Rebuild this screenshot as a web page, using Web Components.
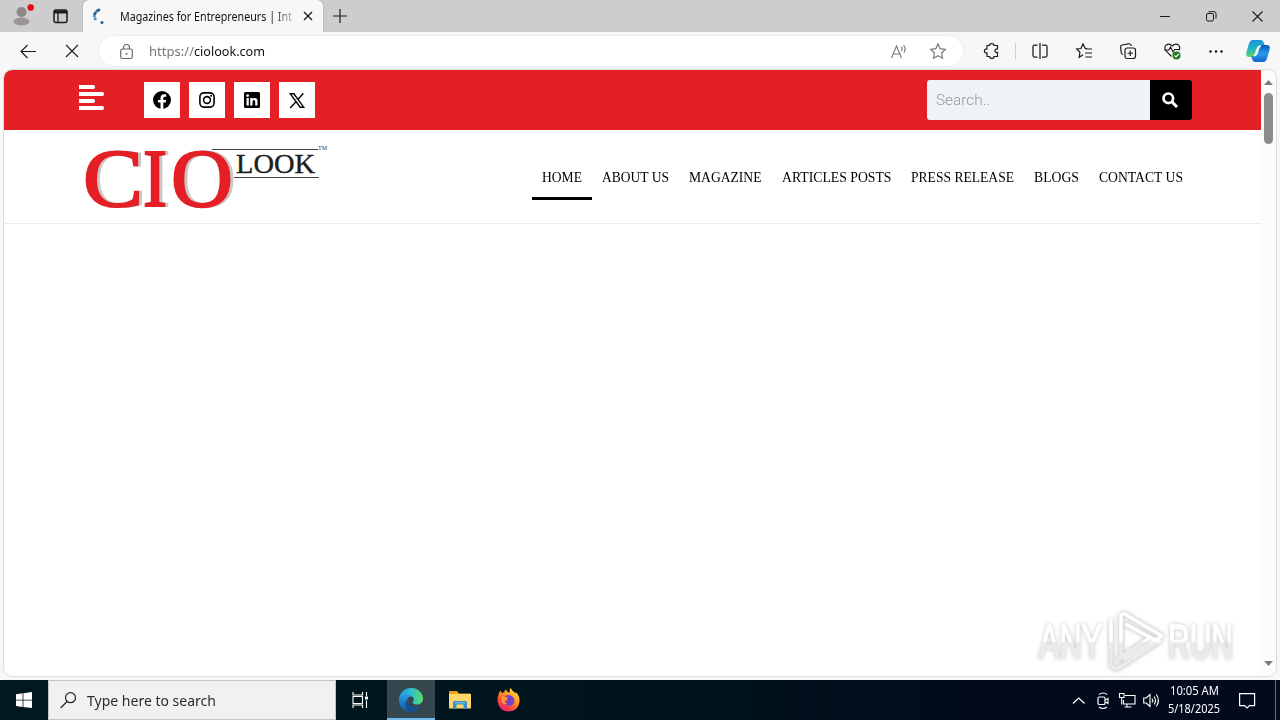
<!DOCTYPE html>
<html lang="en">
<head>
<meta charset="utf-8">
<title>Magazines for Entrepreneurs</title>
<style>
  body {
    margin: 0;
    width: 1280px;
    height: 720px;
    overflow: hidden;
    display: flex;
    flex-direction: column;
    background: #f7f7f7;
    font-family: "Noto Sans", sans-serif;
    color: #111;
  }
</style>
</head>
<body>
<tab-strip label="Magazines for Entrepreneurs | Int"></tab-strip>
<tool-bar></tool-bar>
<page-view>
  <site-top></site-top>
  <site-nav></site-nav>
  <any-watermark slot="overlay"></any-watermark>
</page-view>
<task-bar></task-bar>

<script>
const icons = {
  profile: `<g stroke="none"><circle cx="10.500" cy="7" r="5" fill="#8a8785"/><ellipse cx="10.500" cy="16.500" rx="8" ry="4" fill="#999694"/><circle cx="19.700" cy="2.500" r="3.200" fill="#e00b12"/></g>`,
  workspace: `<rect x="1" y="1" width="13" height="12.500" rx="2" stroke-width="1.500"/><path d="M1 3h13" stroke-width="3"/><path d="M5 4v9.500" stroke-width="1.300"/>`,
  spinner: `<path d="M8 1.500C4 3 2 5.500 2.300 9" stroke="#24618f" stroke-width="2.800" stroke-dasharray="4.200 .5"/><circle cx="3.200" cy="10.800" r="1.500" fill="#4b84ad" stroke="none"/><circle cx="10" cy="14.500" r="1.500" fill="#24618f" stroke="none"/>`,
  close: `<path d="M1 1l8 8M9 1l-8 8" stroke-width="1.400"/>`,
  plus: `<path d="M7 0v14M0 7h14" stroke-width="1.200"/>`,
  minimize: `<path d="M0 5.500h10"/>`,
  restore: `<rect x=".5" y="2.500" width="7" height="7.500" rx="1.500"/><path d="M2.500 .7h5.500q2 0 2 2v5"/>`,
  exit: `<path d="M.5 .5l10 10M10.500 .5l-10 10" stroke-width="1.100"/>`,
  back: `<path d="M16 7.500H1M7.500 1L1 7.500 7.500 14" stroke-width="1.100"/>`,
  stop: `<path d="M1 1l12 12M13 1L1 13" stroke-width="1.100"/>`,
  lock: `<rect x=".7" y="5" width="11.600" height="9.500" rx="1.800" stroke="#6b6b6b" stroke-width="1.200"/><path d="M3.500 5V3.500a3 3 0 016 0V5" stroke="#6b6b6b" stroke-width="1.200"/><circle cx="6.500" cy="9.700" r="1" fill="#6b6b6b" stroke="none"/>`,
  read: `<path d="M.5 14L5.500 2l5 12M2.200 10h6.600M10.300 3q1.700 1.700 0 4M12.500 1q3 3.500 .5 7.500" stroke="#777" stroke-width="1.100"/>`,
  star: `<path d="M8 1l2.200 4.700 5.100.7-3.700 3.600.9 5.200L8 12.700l-4.500 2.500.9-5.200L.7 6.400l5.100-.7z" stroke="#777" stroke-width="1.200"/>`,
  puzzle: `<path d="M3 2.500h2.500c0-2.500 4.500-2.500 4.500 0h3.500v3.500c-3.500-.5-3.500 4 0 3.500v4H10c.5 2.500-4.500 2.500-4.500 0H3V10C-.5 10.500-.5 5.500 3 6z" stroke-width="1.200"/>`,
  split: `<path d="M5.500 2H2.500q-1.500 0-1.500 1.500v9q0 1.500 1.500 1.500h3M10 2h3.500q1.500 0 1.500 1.500v9q0 1.500-1.500 1.500H10M8 0v16" stroke-width="1.250"/>`,
  favorites: `<path d="M11 5.700L9.300 5.500 7 1 5 5.500.7 6l3.200 3.300-.7 5L7 11.700M9.500 6h6.500M9 10h7M9.500 14H16" stroke-width="1.200"/>`,
  collections: `<rect x="5" y="5" width="10.500" height="10.500" rx="2.200" stroke-width="1.200"/><path d="M10.250 7.500v5.500M7.500 10.250H13M3 11.500Q1.500 11 1.200 9.500L.6 4Q.5 2.300 2 2L8.500 .8q2-.3 2.500 1.200L11.500 3" stroke-width="1.200"/>`,
  health: `<path d="M7.500 13.500L2 8Q-.3 4.500 2 2.200 5.500-.3 8.300 3 11.500-.3 14.800 2.300q2 2.500 0 5M.3 7h4.500l1.700-3 2.500 5 1.600-2.500H16" stroke-width="1.100"/><circle cx="12.500" cy="12.500" r="4" fill="#187b1c" stroke="none"/><path d="M10.500 12.500l1.500 1.500 2.700-3" stroke="#fff" stroke-width="1.200"/>`,
  dots: `<g fill="#111" stroke="none"><circle cx="1.500" cy="1.500" r="1.250"/><circle cx="7" cy="1.500" r="1.250"/><circle cx="12.500" cy="1.500" r="1.250"/></g>`,
  copilot: `<defs><linearGradient id="a" x1="0" y1="0" x2=".2" y2="1"><stop stop-color="#1d8be8"/><stop offset=".5" stop-color="#1cb0c9"/><stop offset="1" stop-color="#65d968"/></linearGradient><linearGradient id="b" x1="0" y1="0" x2="0" y2="1"><stop stop-color="#0a55b5"/><stop offset=".5" stop-color="#2a9ce8"/><stop offset="1" stop-color="#1467d8"/></linearGradient></defs><g stroke="none"><path d="M7 0h8q2 0 2.700 2.500L19 6h-4q-2 0-2.700 2L10 14q-1 3-3 3H3.500Q-1 17 .5 12L3 3.500Q4 0 7 0z" fill="url(#a)"/><path d="M17 22H9q-2 0-2.700-2.500L5 16h3.500q2 0 2.500-2l2-6q1-3 4-3h3.500Q25 5 23.500 10L21 18.500Q20 22 17 22z" fill="url(#b)"/><path d="M13.500 6q-1.700.5-2.200 2L9 14.500q-.4 1.200-1.200 1.500 2.200.2 3.200-2l2-6q.6-1.700 2-2z" fill="#fff" stroke="#fff" stroke-width="1"/></g>`,
  menu: `<g fill="#fff" stroke="none"><path d="M0 0h14.500q1.500 0 1.500 2t-1.500 2H0zM0 7h23.500q1.500 0 1.500 2t-1.500 2H0zM0 14h14.500q1.500 0 1.500 2t-1.500 2H0zM0 21h23.500q1.500 0 1.500 2t-1.500 2H0z"/></g>`,
  facebook: `<circle cx="9" cy="9" r="9" fill="#000" stroke="none"/><path d="M7.500 18v-6.500H5V9h2.500V7q0-3.800 3.700-3.800h2V5.700h-1.300q-1.600 0-1.600 1.500V9h2.800l-.5 2.500h-2.300V18z" fill="#fff" stroke="none"/>`,
  instagram: `<rect x=".9" y=".9" width="14.200" height="14.200" rx="4" stroke="#000" stroke-width="1.600"/><circle cx="8" cy="8" r="3.400" stroke="#000" stroke-width="1.600"/><circle cx="12.200" cy="3.800" r="1" fill="#000" stroke="none"/>`,
  linkedin: `<rect width="16" height="16" rx="1.500" fill="#000" stroke="none"/><g fill="#fff" stroke="none"><circle cx="3.600" cy="3.600" r="1.400"/><path d="M2.500 6.100h2.300v7.500H2.500zM6.200 6.100h2.200v1q.8-1.200 2.300-1.200 2.800 0 2.800 3.200v4.500h-2.300V9.600q0-1.700-1.200-1.700-1.500 0-1.500 1.700v4H6.200z"/></g>`,
  x: `<path d="M1.300 .8h3.500L14.700 14.200h-3.500zM14.300 .3L9 6.500M6.800 9L1.200 15" stroke="#000" stroke-width="1.400"/>`,
  search: `<circle cx="6.300" cy="6.300" r="4.800" stroke="#fff" stroke-width="2.600"/><path d="M10 10l5 5" stroke="#fff" stroke-width="3"/>`,
  up: `<path d="M0 5L4.500 0 9 5z" fill="#7c7c7c" stroke="none"/>`,
  down: `<path d="M0 0h9L4.500 5z" fill="#7c7c7c" stroke="none"/>`,
  windows: `<path d="M0 2.300L6.600 1.300v6.400H0zM7.400 1.200L16 0v7.700H7.400zM0 8.400h6.600v6.500L0 13.900zM7.400 8.400H16V16l-8.600-1.100z" fill="#fff" stroke="none"/>`,
  lens: `<circle cx="10.500" cy="5.700" r="5" stroke="#222" stroke-width="1.200"/><path d="M7 9.500L.7 16" stroke="#222" stroke-width="1.200"/>`,
  taskview: `<path d="M1 0v3h9.500V0M1 16v-3h9.500v3M1 4.500h9.500v7H1zM14.500 0v4M14.500 8.500V16" stroke="#fff" stroke-width="1.100"/><path d="M13 4.500h3v3h-3z" fill="#fff" stroke="none"/>`,
  edge: `<defs><linearGradient id="a"><stop stop-color="#2294df"/><stop offset=".5" stop-color="#2cbfd4"/><stop offset="1" stop-color="#5cdc62"/></linearGradient><linearGradient id="b" x2="0" y2="1"><stop stop-color="#2b9de2"/><stop offset="1" stop-color="#0c55a5"/></linearGradient></defs><g stroke="none"><path d="M0 12C0 5 5 0 12 0s12 5 12 10.500c0 4-3 6-6 6-4 0-5-1.700-3.700-3.200C17 9 9 5 3 9q-2 1-3 3z" fill="url(#a)"/><path d="M0 12C1 7 9 5.500 13 8.500c-4-.5-5 3-4.500 5 1 5 6.500 7 12.500 5.500-3 4-7 5-10 4.800C4.500 23.500 0 18.500 0 12z" fill="url(#b)"/><path d="M8.500 11c-4 4-2 11 4 12.800 4-.3 7-2.300 8.700-4.900C15 21 8 18 8.500 11z" fill="#164f8e"/></g>`,
  folder: `<g stroke="none"><path d="M0 1q0-1 1-1h7l2 2.500h11V17H0z" fill="#e9a21c"/><path d="M0 3h22v14.500H0z" fill="#fbd86c"/><path d="M4 18v-6.500q0-1.500 1.500-1.500h11q1.500 0 1.500 1.500V18h-3.500v-4.500h-7V18z" fill="#3e8cc8"/><path d="M6 11h10v1.500H6z" fill="#73b6e2"/></g>`,
  firefox: `<defs><linearGradient id="a" x1=".9" y1="0" x2=".2" y2="1"><stop stop-color="#fff14a"/><stop offset=".4" stop-color="#ff9a22"/><stop offset=".7" stop-color="#ff4b3d"/><stop offset="1" stop-color="#e01585"/></linearGradient></defs><g stroke="none"><path d="M2 5L3.200 2.500 5 5 7.500 4 8 1.500q2 1 3 3l2-.5Q12 2 13.500 0q2 3.500 5.500 5.500l-.3-1.500Q23 8 22.500 13.500 21.500 23 11.500 23.500 1.500 23 .5 13 .3 9 2 5z" fill="url(#a)"/><path d="M8 8.500q4-3 8 .5 2.500 3 .5 6.500-2.500 3.500-6.500 2-3.500-1.500-3.200-4.500 2 1 4-.5L9 10.500z" fill="#7441cf"/><path d="M5 8q3 1 6 1.500-.5 2-3.500 2.500 0 3 3.500 4-5 1-6.500-3z" fill="#ff982b"/></g>`,
  chevron: `<path d="M0 6.500L5.750 1l5.750 5.500" stroke="#fff" stroke-width="1.200"/>`,
  meet: `<rect x="1" y="5" width="7" height="7.500" rx="1.300" stroke="#fff" stroke-width="1.200"/><path d="M8.500 8l2.500-1.500v5L8.500 10M2 2.500Q6 -.5 10 2.500M2 15Q6 18 10 15" stroke="#fff" stroke-width="1.100"/>`,
  network: `<path d="M6 2.500h10v8.500H4.500V7M8 11v3M5.500 14h7M.5 .5h4.500v4H.5zM2.700 5v6.500" stroke="#fff" stroke-width="1.100"/>`,
  sound: `<path d="M.7 5h2.500L7 1.500v12L3.200 10H.7zM9 5.500q1.500 2 0 4M11 3.500q3 4 0 8M13.300 1.500q4.200 6 0 12" stroke="#fff" stroke-width="1.100"/>`,
  notify: `<path d="M.6 .6h15v12h-5L8 15l-2.500-2.400H.6z" stroke="#fff" stroke-width="1.200"/>`,
};

const render = (host, html) => {
  host.attachShadow({ mode: 'open' });
  const template = document.createElement('template');
  template.innerHTML = html;
  host.shadowRoot.appendChild(template.content.cloneNode(true));
};

// <ui-icon name w h box>: the drawing is centred in a cell "box" pixels wide
class UiIcon extends HTMLElement {
  connectedCallback() {
    if (this.shadowRoot) return;
    const w = this.getAttribute('w');
    const h = this.getAttribute('h');
    const box = this.getAttribute('box') || w;
    render(this, `
      <style>
        :host { display: flex; flex: none; width: ${box}px; align-items: center; justify-content: center; }
        svg { display: block; overflow: visible; flex: none; fill: none; stroke: #1b1b1b; }
      </style>
      <svg width="${w}" height="${h}" viewBox="0 0 ${w} ${h}">${icons[this.getAttribute('name')]}</svg>
    `);
  }
}

// <fit-text w>: one line, condensed or widened so that it is exactly w pixels wide
class FitText extends HTMLElement {
  connectedCallback() {
    if (this.shadowRoot) return;
    const w = Number(this.getAttribute('w'));
    render(this, `
      <style>
        :host { display: block; flex: none; width: ${w}px; white-space: nowrap; }
        span { display: inline-block; transform-origin: 0 50%; }
      </style>
      <span><slot></slot></span>
    `);
    const line = this.shadowRoot.querySelector('span');
    line.style.transform = `scaleX(${w / line.getBoundingClientRect().width})`;
  }
}

class TabStrip extends HTMLElement {
  connectedCallback() {
    if (this.shadowRoot) return;
    render(this, `
      <style>
        :host { display: flex; flex: none; height: 32px; background: #cdcdcd; }
        .tab {
          display: flex;
          align-items: center;
          box-sizing: border-box;
          width: 240px;
          margin-left: 7px;
          padding: 0 10px 0 9px;
          border-radius: 6px 6px 0 0;
          background: #f7f7f7;
          box-shadow: 0 0 2px #999;
          clip-path: inset(0 -3px 0 -3px);
        }
        fit-text {
          margin-left: 14px;
          font-size: 12px;
          -webkit-mask: linear-gradient(90deg, #000 152px, #0003 174px);
          mask: linear-gradient(90deg, #000 152px, #0003 174px);
        }
        .tab ui-icon:last-child { margin-left: auto; }
        .space { flex: 1; }
      </style>
      <ui-icon name="profile" w="22" h="22" box="44"></ui-icon>
      <ui-icon name="workspace" w="15" h="14" box="32"></ui-icon>
      <div class="tab">
        <ui-icon name="spinner" w="14" h="16"></ui-icon>
        <fit-text w="172">${this.getAttribute('label')}</fit-text>
        <ui-icon name="close" w="10" h="10"></ui-icon>
      </div>
      <ui-icon name="plus" w="14" h="14" box="34"></ui-icon>
      <div class="space"></div>
      <ui-icon name="minimize" w="10" h="10" box="46"></ui-icon>
      <ui-icon name="restore" w="11" h="11" box="46"></ui-icon>
      <ui-icon name="exit" w="11" h="11" box="46"></ui-icon>
    `);
  }
}

class ToolBar extends HTMLElement {
  constructor() {
    super();
    render(this, `
      <style>
        :host { display: flex; flex: none; align-items: center; height: 38px; padding-left: 6px; box-sizing: border-box; }
        .address {
          display: flex;
          align-items: center;
          box-sizing: border-box;
          width: 864px;
          height: 30px;
          margin: 0 7px 0 5px;
          padding: 0 5px 0 7px;
          border-radius: 15px;
          background: #fff;
          box-shadow: 0 0 2px #ddd;
        }
        .url { display: flex; flex: 1; margin-left: 3px; font-size: 13px; }
        .scheme { color: #767676; }
        hr { width: 1px; height: 16px; border: 0; margin: 0 2px 0 3px; background: #cfcfcf; }
      </style>
      <ui-icon name="back" w="16" h="15" box="44"></ui-icon>
      <ui-icon name="stop" w="14" h="14" box="44"></ui-icon>
      <div class="address">
        <ui-icon name="lock" w="13" h="15" box="40"></ui-icon>
        <div class="url">
          <fit-text class="scheme" w="45">https://</fit-text><fit-text w="71">ciolook.com</fit-text>
        </div>
        <ui-icon name="read" w="15" h="15" box="40"></ui-icon>
        <ui-icon name="star" w="16" h="16" box="40"></ui-icon>
      </div>
      <ui-icon name="puzzle" w="15" h="16" box="42"></ui-icon>
      <hr>
      <ui-icon name="split" w="16" h="16" box="44"></ui-icon>
      <ui-icon name="favorites" w="16" h="16" box="44"></ui-icon>
      <ui-icon name="collections" w="16" h="16" box="44"></ui-icon>
      <ui-icon name="health" w="16" h="16" box="44"></ui-icon>
      <ui-icon name="dots" w="14" h="3" box="44"></ui-icon>
      <ui-icon name="copilot" w="24" h="22" box="40"></ui-icon>
    `);
  }
}

class PageView extends HTMLElement {
  constructor() {
    super();
    render(this, `
      <style>
        :host {
          position: relative;
          display: flex;
          flex: none;
          width: 1272px;
          height: 606px;
          margin: 0 4px 4px;
          border-radius: 8px;
          overflow: hidden;
          background: #fff;
          outline: 1px solid #dedede;
        }
        .content { flex: 1; }
        .scroll {
          display: flex;
          flex-direction: column;
          align-items: center;
          justify-content: space-between;
          width: 15px;
          box-sizing: border-box;
          padding: 10px 0;
          background: #fcfcfc;
        }
        .thumb { width: 9px; height: 51px; margin: 8px 0 auto; border-radius: 5px; background: #8b8b8b; }
      </style>
      <div class="content"><slot></slot></div>
      <div class="scroll">
        <ui-icon name="up" w="9" h="5"></ui-icon>
        <div class="thumb"></div>
        <ui-icon name="down" w="9" h="5"></ui-icon>
      </div>
      <slot name="overlay"></slot>
    `);
  }
}

class SiteTop extends HTMLElement {
  constructor() {
    super();
    render(this, `
      <style>
        :host {
          display: flex;
          align-items: center;
          box-sizing: border-box;
          height: 60px;
          padding: 0 69px 0 75px;
          background: #e41f26;
        }
        .menu { align-self: flex-start; margin: 15px 40px 0 0; }
        .social { display: flex; gap: 9px; }
        .social ui-icon { height: 36px; background: #fff; }
        .search { display: flex; margin-left: auto; height: 40px; border-radius: 3px; overflow: hidden; }
        .field {
          display: flex;
          align-items: center;
          width: 214px;
          padding-left: 9px;
          background: #eff2f6;
          color: #97999c;
          font: 300 15px Roboto, sans-serif;
        }
        .go { background: #000; padding-right: 2px; }
      </style>
      <ui-icon class="menu" name="menu" w="25" h="25"></ui-icon>
      <div class="social">
        <ui-icon name="facebook" w="18" h="18" box="36"></ui-icon>
        <ui-icon name="instagram" w="16" h="16" box="36"></ui-icon>
        <ui-icon name="linkedin" w="16" h="16" box="36"></ui-icon>
        <ui-icon name="x" w="16" h="15" box="36"></ui-icon>
      </div>
      <div class="search">
        <div class="field"><fit-text w="54">Search..</fit-text></div>
        <ui-icon class="go" name="search" w="16" h="16" box="40"></ui-icon>
      </div>
    `);
  }
}

class SiteNav extends HTMLElement {
  constructor() {
    super();
    const links = [
      ['HOME', 40], ['ABOUT US', 67], ['MAGAZINE', 72.5], ['ARTICLES POSTS', 109.5],
      ['PRESS RELEASE', 103], ['BLOGS', 45], ['CONTACT US', 84],
    ];
    render(this, `
      <style>
        :host {
          display: flex;
          justify-content: space-between;
          box-sizing: border-box;
          height: 94px;
          padding: 0 68px 0 80px;
          border-bottom: 1px solid #ececec;
        }
        .logo { display: block; margin-top: 12px; overflow: visible; font-family: "Liberation Serif", serif; }
        .big { font-size: 83px; fill: #e41f26; stroke: #e41f26; stroke-width: 2; filter: drop-shadow(3px .5px 0 #cbc7c2); }
        nav { display: flex; align-items: flex-start; padding-top: 25px; color: #000; font: 15px/45px "Liberation Serif", serif; }
        nav fit-text { padding: 0 10px; height: 42px; border-bottom: 3px solid transparent; }
        nav fit-text:first-child { border-color: #000; }
      </style>
      <svg class="logo" width="244" height="70" viewBox="84 142 244 70">
        <g class="big">
          <text x="83" y="206" textLength="60" lengthAdjust="spacingAndGlyphs">C</text>
          <text x="143" y="206" textLength="24" lengthAdjust="spacingAndGlyphs">I</text>
          <text x="171" y="206" textLength="62" lengthAdjust="spacingAndGlyphs">O</text>
        </g>
        <path d="M212 149.500h106M234 177.500h85" stroke="#444" fill="none"/>
        <text x="236" y="172.500" font-size="28" fill="#1d1d1d" stroke="#1d1d1d" stroke-width=".4" textLength="79" lengthAdjust="spacingAndGlyphs">LOOK</text>
        <text x="318" y="150" font-size="6" fill="#333" textLength="9">TM</text>
      </svg>
      <nav>${links.map(([label, w]) => `<fit-text w="${w}">${label}</fit-text>`).join('')}</nav>
    `);
  }
}

class AnyWatermark extends HTMLElement {
  constructor() {
    super();
    render(this, `
      <style>
        :host { position: absolute; left: 1030px; top: 536px; }
        svg { display: block; overflow: visible; filter: drop-shadow(0 0 2px #c4c4c4); }
        text { font: 49px "Liberation Sans Narrow", "Liberation Sans", sans-serif; }
      </style>
      <svg width="204" height="70" viewBox="1034 606 204 70" fill="url(#fade)">
        <defs>
          <linearGradient id="fade" gradientUnits="userSpaceOnUse" x1="0" y1="641" x2="0" y2="643">
            <stop stop-color="#fff"/><stop offset="1" stop-color="#ebebeb"/>
          </linearGradient>
        </defs>
        <g stroke="url(#fade)" stroke-width="1.500">
          <text x="1039" y="658" textLength="63" lengthAdjust="spacingAndGlyphs">ANY</text>
          <text x="1168" y="658" textLength="65" lengthAdjust="spacingAndGlyphs">RUN</text>
        </g>
        <path d="M1121 613v42M1123 613l39 23-39 24M1125 624l34 18M1111 619v47l6 3 44-29M1117 660l34-23" fill="none" stroke="#dcdcdc" stroke-width="4.600" stroke-linejoin="round"/>
        <path d="M1121 613v42M1123 613l39 23-39 24M1125 624l34 18M1111 619v47l6 3 44-29M1117 660l34-23" fill="none" stroke="url(#fade)" stroke-width="3.600" stroke-linejoin="round"/>
      </svg>
    `);
  }
}

class TaskBar extends HTMLElement {
  constructor() {
    super();
    render(this, `
      <style>
        :host { display: flex; flex: none; height: 40px; background: linear-gradient(90deg, #001920, #00141c 50%, #020a1b 80%); color: #fff; }
        .search {
          display: flex;
          align-items: center;
          box-sizing: border-box;
          width: 288px;
          padding-left: 11px;
          border: 1px solid #c4c4c4;
          background: #f1f1f1;
          color: #2b2b2b;
          font-size: 14.5px;
        }
        .search fit-text { margin-left: 11px; }
        .active { background: #36474d; box-shadow: inset 0 -2px #76b9ed; margin-left: 3px; }
        .tray { display: flex; margin-left: auto; }
        .clock { display: flex; flex-direction: column; align-items: center; width: 62px; font-size: 12px; line-height: 18px; padding: 2px 2px 0 0; }
        .desk { width: 4px; margin-left: 8px; border-left: 1px solid #68707c; }
      </style>
      <ui-icon name="windows" w="16" h="16" box="48"></ui-icon>
      <div class="search">
        <ui-icon name="lens" w="16" h="17"></ui-icon>
        <fit-text w="129">Type here to search</fit-text>
      </div>
      <ui-icon name="taskview" w="16" h="16" box="48"></ui-icon>
      <ui-icon class="active" name="edge" w="24" h="24" box="48"></ui-icon>
      <ui-icon name="folder" w="22" h="18" box="49"></ui-icon>
      <ui-icon name="firefox" w="23" h="24" box="49"></ui-icon>
      <div class="tray">
        <ui-icon name="chevron" w="12" h="7" box="24"></ui-icon>
        <ui-icon name="meet" w="12" h="17" box="24"></ui-icon>
        <ui-icon name="network" w="16" h="15" box="24"></ui-icon>
        <ui-icon name="sound" w="16" h="15" box="24"></ui-icon>
        <div class="clock">
          <fit-text w="49">10:05 AM</fit-text>
          <fit-text w="52">5/18/2025</fit-text>
        </div>
        <ui-icon name="notify" w="16" h="15" box="40"></ui-icon>
        <div class="desk"></div>
      </div>
    `);
  }
}

customElements.define('ui-icon', UiIcon);
customElements.define('fit-text', FitText);
customElements.define('tab-strip', TabStrip);
customElements.define('tool-bar', ToolBar);
customElements.define('page-view', PageView);
customElements.define('site-top', SiteTop);
customElements.define('site-nav', SiteNav);
customElements.define('any-watermark', AnyWatermark);
customElements.define('task-bar', TaskBar);
</script>
</body>
</html>
